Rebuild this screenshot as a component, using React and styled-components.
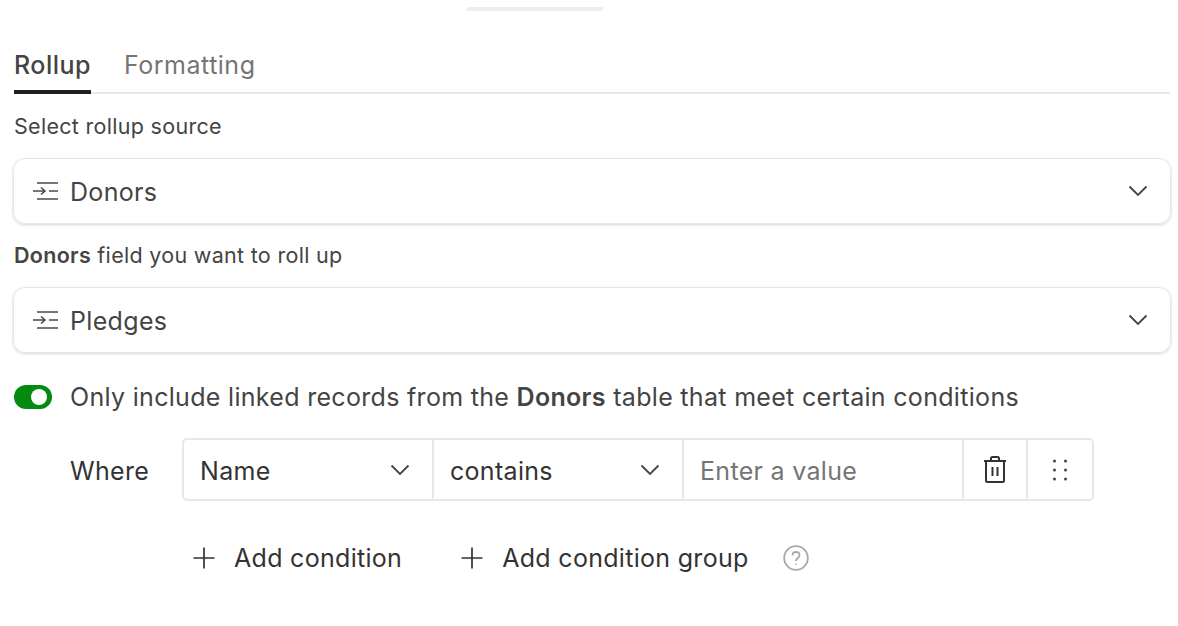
import React from "react";
import styled, { createGlobalStyle } from "styled-components";

const Global = createGlobalStyle`
  html, body { margin: 0; padding: 0; background: #fff; }
  body { font-family: Inter, "Liberation Sans", sans-serif; color: #333; -webkit-font-smoothing: antialiased; }
`;

const Page = styled.div`
  width: 1178px;
  height: 626px;
  box-sizing: border-box;
  padding: 7px 8px 0 14px;
  overflow: hidden;
  display: flex;
  flex-direction: column;
`;
const Handle = styled.div`
  width: 136px;
  height: 4px;
  background: #eeeeee;
  align-self: flex-start;
  margin-left: 453px;
`;
const Tabs = styled.div`
  display: flex;
  gap: 33px;
  height: 83px;
  box-sizing: border-box;
  border-bottom: 2px solid #e8e8e8;
`;
const Tab = styled.div`
  height: 83px;
  box-sizing: border-box;
  padding-top: 37px;
  font-size: 25px;
  line-height: 34px;
  letter-spacing: 0.5px;
  font-weight: ${(p) => (p.$active ? 500 : 400)};
  color: ${(p) => (p.$active ? "#444" : "#757575")};
  border-bottom: ${(p) => (p.$active ? "4px solid #1d1f25" : "none")};
`;
const Label = styled.div`
  font-size: 21.5px;
  line-height: 30px;
  letter-spacing: 0.3px;
  color: #444;
  margin-top: ${(p) => p.$top}px;
  strong { font-weight: 600; }
`;
const Select = styled.div`
  height: 66px;
  margin: 17px -1px 0;
  box-sizing: border-box;
  border: 1px solid #e6e6e6;
  border-radius: 12px;
  box-shadow: 0 1px 3px rgba(0,0,0,0.16);
  display: flex;
  align-items: center;
  padding: 0 22px 0 18px;
  gap: 12px;
  font-size: 25px;
  letter-spacing: 0.33px;
  color: #444;
  span { flex: 1; padding-top: 2px; }
`;
const ToggleRow = styled.div`
  display: flex;
  align-items: center;
  gap: 18px;
  margin-top: 26px;
  height: 36px;
  font-size: 25px;
  letter-spacing: 0.31px;
  color: #444;
  strong { font-weight: 600; }
`;
const Toggle = styled.div`
  width: 38px;
  height: 24px;
  border-radius: 12px;
  background: #048a0e;
  position: relative;
  &::after {
    content: "";
    position: absolute;
    width: 16px;
    height: 16px;
    border-radius: 50%;
    background: #fff;
    top: 4px;
    right: 5px;
  }
`;
const WhereRow = styled.div`
  display: flex;
  align-items: center;
  margin-top: 23px;
  padding-left: 56px;
`;
const Where = styled.div`
  width: 112px;
  font-size: 25px;
  letter-spacing: 0.3px;
  padding-top: 3px;
  color: #333;
`;
const Group = styled.div`
  display: flex;
  height: 63px;
  box-sizing: border-box;
  border: 2px solid #e8e8e8;
  border-radius: 5px;
  font-size: 25px;
  letter-spacing: 0.3px;
`;
const Cell = styled.div`
  width: ${(p) => p.$w}px;
  box-sizing: border-box;
  display: flex;
  align-items: center;
  justify-content: ${(p) => (p.$center ? "center" : "space-between")};
  padding: ${(p) => (p.$center ? "0" : "0 22px 0 16px")};
  color: ${(p) => (p.$muted ? "#757575" : "#333")};
  & + & { border-left: 2px solid #e8e8e8; }
`;
const CellText = styled.span`
  padding-top: 2px;
`;
const Actions = styled.div`
  display: flex;
  align-items: center;
  margin-top: 25px;
  padding-left: 178px;
  font-size: 25px;
  letter-spacing: 0.3px;
  color: #333;
  height: 64px;
`;
const Action = styled.div`
  display: flex;
  align-items: center;
  gap: 18px;
  margin-right: ${(p) => p.$mr}px;
`;

const Lines = () => (
  <svg width="26" height="20" viewBox="0 0 26 20" fill="none" stroke="#4a4a4a" strokeWidth="1.6">
    <path d="M5 2h21M5 18h21M1 10h12M9 6.5 13 10l-4 3.5M17 10h9" />
  </svg>
);
const Chevron = () => (
  <svg width="20" height="12" viewBox="0 0 20 12" fill="none" stroke="#444" strokeWidth="1.8">
    <path d="M1.5 1.5 10 10l8.5-8.5" />
  </svg>
);
const Plus = () => (
  <svg width="24" height="24" viewBox="0 0 24 24" fill="none" stroke="#333" strokeWidth="1.7">
    <path d="M12 1.5v21M1.5 12h21" />
  </svg>
);
const Trash = () => (
  <svg width="24" height="28" viewBox="0 0 24 28" fill="none" stroke="#333" strokeWidth="2">
    <path d="M1 5h22M8 5V2.5Q8 1 9.5 1h5Q16 1 16 2.5V5M3 5v19.5Q3 26 4.5 26h15q1.5 0 1.5-1.5V5M9.5 11v9M14.5 11v9" />
  </svg>
);
const Dots = () => (
  <svg width="14" height="22" viewBox="0 0 14 22" fill="#444">
    {[2, 11, 20].flatMap((y) => [1.5, 12.5].map((x) => <circle key={`${x}-${y}`} cx={x} cy={y} r="1.5" />))}
  </svg>
);
const Help = () => (
  <svg width="26" height="26" viewBox="0 0 26 26" fill="none" stroke="#a8a8a8" strokeWidth="1.8">
    <circle cx="13" cy="13" r="11.8" />
    <path d="M9.5 10.5Q9.5 7 13 7t3.5 3.3c0 2.7-3.5 2.7-3.5 5.7" />
    <circle cx="13" cy="19.3" r="0.8" fill="#a8a8a8" stroke="none" />
  </svg>
);

export default function App() {
  return (
    <Page>
      <Global />
      <Handle />
      <Tabs>
        <Tab $active>Rollup</Tab>
        <Tab>Formatting</Tab>
      </Tabs>
      <Label $top={17}>Select rollup source</Label>
      <Select><Lines /><span>Donors</span><Chevron /></Select>
      <Label $top={16}><strong>Donors</strong> field you want to roll up</Label>
      <Select><Lines /><span>Pledges</span><Chevron /></Select>
      <ToggleRow>
        <Toggle />
        <div>Only include linked records from the <strong>Donors</strong> table that meet certain conditions</div>
      </ToggleRow>
      <WhereRow>
        <Where>Where</Where>
        <Group>
          <Cell $w={248}><CellText>Name</CellText><Chevron /></Cell>
          <Cell $w={250}><CellText>contains</CellText><Chevron /></Cell>
          <Cell $w={280} $muted><CellText>Enter a value</CellText></Cell>
          <Cell $w={64} $center><Trash /></Cell>
          <Cell $w={66} $center><Dots /></Cell>
        </Group>
      </WhereRow>
      <Actions>
        <Action $mr={58}><Plus />Add condition</Action>
        <Action $mr={34}><Plus />Add condition group</Action>
        <Help />
      </Actions>
    </Page>
  );
}
